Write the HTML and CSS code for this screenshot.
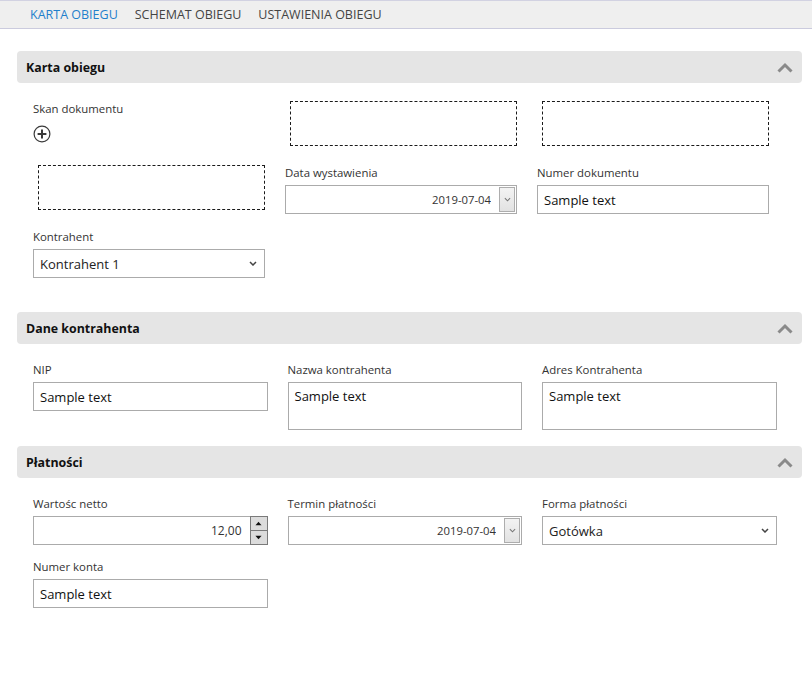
FILE: index.html
```html
<!DOCTYPE html>
<html lang="pl">
<head>
    <meta charset="UTF-8">
    <meta name="viewport" content="width=device-width, initial-scale=1.0">
    <title>Karta obiegu</title>
    <link rel="stylesheet" href="styles.css">
</head>
<body>
    <nav class="tabs">
        <a class="tab active" href="#">KARTA OBIEGU</a>
        <a class="tab" href="#">SCHEMAT OBIEGU</a>
        <a class="tab" href="#">USTAWIENIA OBIEGU</a>
    </nav>

    <section class="panel">
        <div class="panel-head">
            <h2>Karta obiegu</h2>
            <svg class="collapse" viewBox="0 0 16 11"><polyline points="1.5,9.5 8,3 14.5,9.5"/></svg>
        </div>
        <div class="panel-body cols-narrow first">
            <div class="field">
                <label>Skan dokumentu</label>
                <button type="button" class="add-scan">
                    <svg viewBox="0 0 18 18"><circle cx="9" cy="9" r="7.9"/><path d="M9 4.6v8.8M4.6 9h8.8"/></svg>
                </button>
            </div>
            <div class="drop"></div>
            <div class="drop"></div>
            <div class="drop"></div>
            <div class="field">
                <label for="dataWyst">Data wystawienia</label>
                <div class="date">
                    <input type="text" id="dataWyst" value="2019-07-04">
                    <button type="button" class="date-btn">
                        <svg viewBox="0 0 8 5"><polyline points="1,1 4,4 7,1"/></svg>
                    </button>
                </div>
            </div>
            <div class="field">
                <label for="numerDok">Numer dokumentu</label>
                <input type="text" id="numerDok" value="Sample text">
            </div>
            <div class="field">
                <label for="kontrahent">Kontrahent</label>
                <div class="select">
                    <select id="kontrahent">
                        <option>Kontrahent 1</option>
                        <option>Kontrahent 2</option>
                    </select>
                    <svg viewBox="0 0 8 5"><polyline points="1,1 4,4 7,1"/></svg>
                </div>
            </div>
        </div>
    </section>

    <section class="panel">
        <div class="panel-head">
            <h2>Dane kontrahenta</h2>
            <svg class="collapse" viewBox="0 0 16 11"><polyline points="1.5,9.5 8,3 14.5,9.5"/></svg>
        </div>
        <div class="panel-body cols-wide">
            <div class="field">
                <label for="nip">NIP</label>
                <input type="text" id="nip" value="Sample text">
            </div>
            <div class="field">
                <label for="nazwa">Nazwa kontrahenta</label>
                <textarea id="nazwa">Sample text</textarea>
            </div>
            <div class="field">
                <label for="adres">Adres Kontrahenta</label>
                <textarea id="adres">Sample text</textarea>
            </div>
        </div>
    </section>

    <section class="panel">
        <div class="panel-head">
            <h2>Płatności</h2>
            <svg class="collapse" viewBox="0 0 16 11"><polyline points="1.5,9.5 8,3 14.5,9.5"/></svg>
        </div>
        <div class="panel-body cols-wide">
            <div class="field">
                <label for="netto">Wartośc netto</label>
                <div class="number">
                    <input type="text" id="netto" value="12,00">
                    <div class="spin">
                        <button type="button"><svg viewBox="0 0 8 5"><polygon points="0.5,4.5 4,0.5 7.5,4.5"/></svg></button>
                        <button type="button"><svg viewBox="0 0 8 5"><polygon points="0.5,0.5 4,4.5 7.5,0.5"/></svg></button>
                    </div>
                </div>
            </div>
            <div class="field">
                <label for="termin">Termin płatności</label>
                <div class="date">
                    <input type="text" id="termin" value="2019-07-04">
                    <button type="button" class="date-btn">
                        <svg viewBox="0 0 8 5"><polyline points="1,1 4,4 7,1"/></svg>
                    </button>
                </div>
            </div>
            <div class="field">
                <label for="forma">Forma płatności</label>
                <div class="select">
                    <select id="forma">
                        <option>Gotówka</option>
                        <option>Przelew</option>
                    </select>
                    <svg viewBox="0 0 8 5"><polyline points="1,1 4,4 7,1"/></svg>
                </div>
            </div>
            <div class="field">
                <label for="konto">Numer konta</label>
                <input type="text" id="konto" value="Sample text">
            </div>
        </div>
    </section>
</body>
</html>
```

FILE: styles.css
```css
body {
    margin: 0;
    font-family: "Open Sans", "Noto Sans", sans-serif;
    font-size: 11.4px;
    color: #333;
    background-color: #ffffff;
}
.tabs {
    display: flex;
    align-items: center;
    gap: 17px;
    height: 27px;
    padding-left: 30px;
    margin-bottom: 22px;
    background-color: #efefef;
    border-top: 1px solid #d2d2e2;
    border-bottom: 1px solid #cbcbde;
}
.tab {
    font-size: 12.5px;
    color: #444;
    text-decoration: none;
}
.tab.active {
    color: #1f80cc;
}
.panel {
    margin: 0 10px 16px 17px;
}
.panel-head {
    display: flex;
    align-items: center;
    justify-content: space-between;
    height: 32px;
    padding: 0 9px;
    background-color: #e5e5e5;
    border-radius: 4px;
}
.panel-head h2 {
    margin: 0;
    font-size: 12.4px;
    font-weight: bold;
    color: #111;
}
.collapse {
    width: 16px;
    height: 11px;
    fill: none;
    stroke: #8a8a8a;
    stroke-width: 3;
}
.panel-body {
    display: grid;
    column-gap: 20px;
    row-gap: 14px;
    padding: 18px 0 0 16px;
}
.panel-body.first {
    row-gap: 15px;
    padding-bottom: 18px;
}
.cols-narrow {
    grid-template-columns: repeat(3, 232px);
}
.cols-wide {
    grid-template-columns: repeat(3, 234.5px);
}
.field label {
    display: block;
    line-height: 16px;
    margin-bottom: 4px;
    color: #333;
}
.field input,
.field select,
.field textarea {
    display: block;
    width: 100%;
    height: 29px;
    padding: 0 6px;
    border: 1px solid #ababab;
    border-radius: 0;
    box-sizing: border-box;
    font-family: inherit;
    font-size: 13px;
    color: #111;
    background-color: #fff;
    outline: none;
}
.field textarea {
    height: 48px;
    padding: 4px 6px;
    line-height: 18px;
    resize: none;
}
.add-scan {
    display: block;
    margin-top: 8px;
    padding: 0;
    border: none;
    background: none;
    cursor: pointer;
}
.add-scan svg {
    display: block;
    width: 18px;
    height: 18px;
    fill: none;
    stroke: #3a3a3a;
}
.add-scan circle {
    stroke-width: 1.2;
}
.add-scan path {
    stroke-width: 2;
}
.drop {
    height: 45px;
    margin: 0 0 4px 5px;
    border: 1px dashed #1a1a1a;
    box-sizing: border-box;
}
.date,
.number {
    display: flex;
    align-items: center;
    height: 29px;
    border: 1px solid #ababab;
    box-sizing: border-box;
}
.field .date input,
.field .number input {
    flex: 1;
    min-width: 0;
    height: 27px;
    border: none;
    text-align: right;
    font-size: 12px;
    color: #333;
    padding-right: 8px;
}
.field .date input {
    font-size: 11.3px;
}
.date-btn {
    width: 16px;
    height: 25px;
    margin-right: 1px;
    padding: 0;
    border: 1px solid #adadad;
    background: linear-gradient(#f3f3f3, #e2e2e2);
}
.date-btn svg {
    display: block;
    width: 7px;
    height: 5px;
    margin: 0 auto;
    fill: none;
    stroke: #777;
    stroke-width: 1.2;
}
.number .spin {
    display: flex;
    flex-direction: column;
    align-self: stretch;
    margin: -1px -1px -1px 0;
}
.spin button {
    width: 18px;
    height: 15px;
    padding: 0;
    border: 1px solid #7a7a7a;
    background-color: #dcdcdc;
}
.spin button + button {
    height: 14px;
    border-top: none;
}
.spin svg {
    display: block;
    width: 7px;
    height: 5px;
    margin: 0 auto;
    fill: #111;
}
.select {
    position: relative;
}
.field .select select {
    appearance: none;
    -webkit-appearance: none;
    color: #222;
}
.select svg {
    position: absolute;
    right: 8px;
    top: 12px;
    width: 8px;
    height: 5px;
    fill: none;
    stroke: #444;
    stroke-width: 1.5;
    pointer-events: none;
}
```
